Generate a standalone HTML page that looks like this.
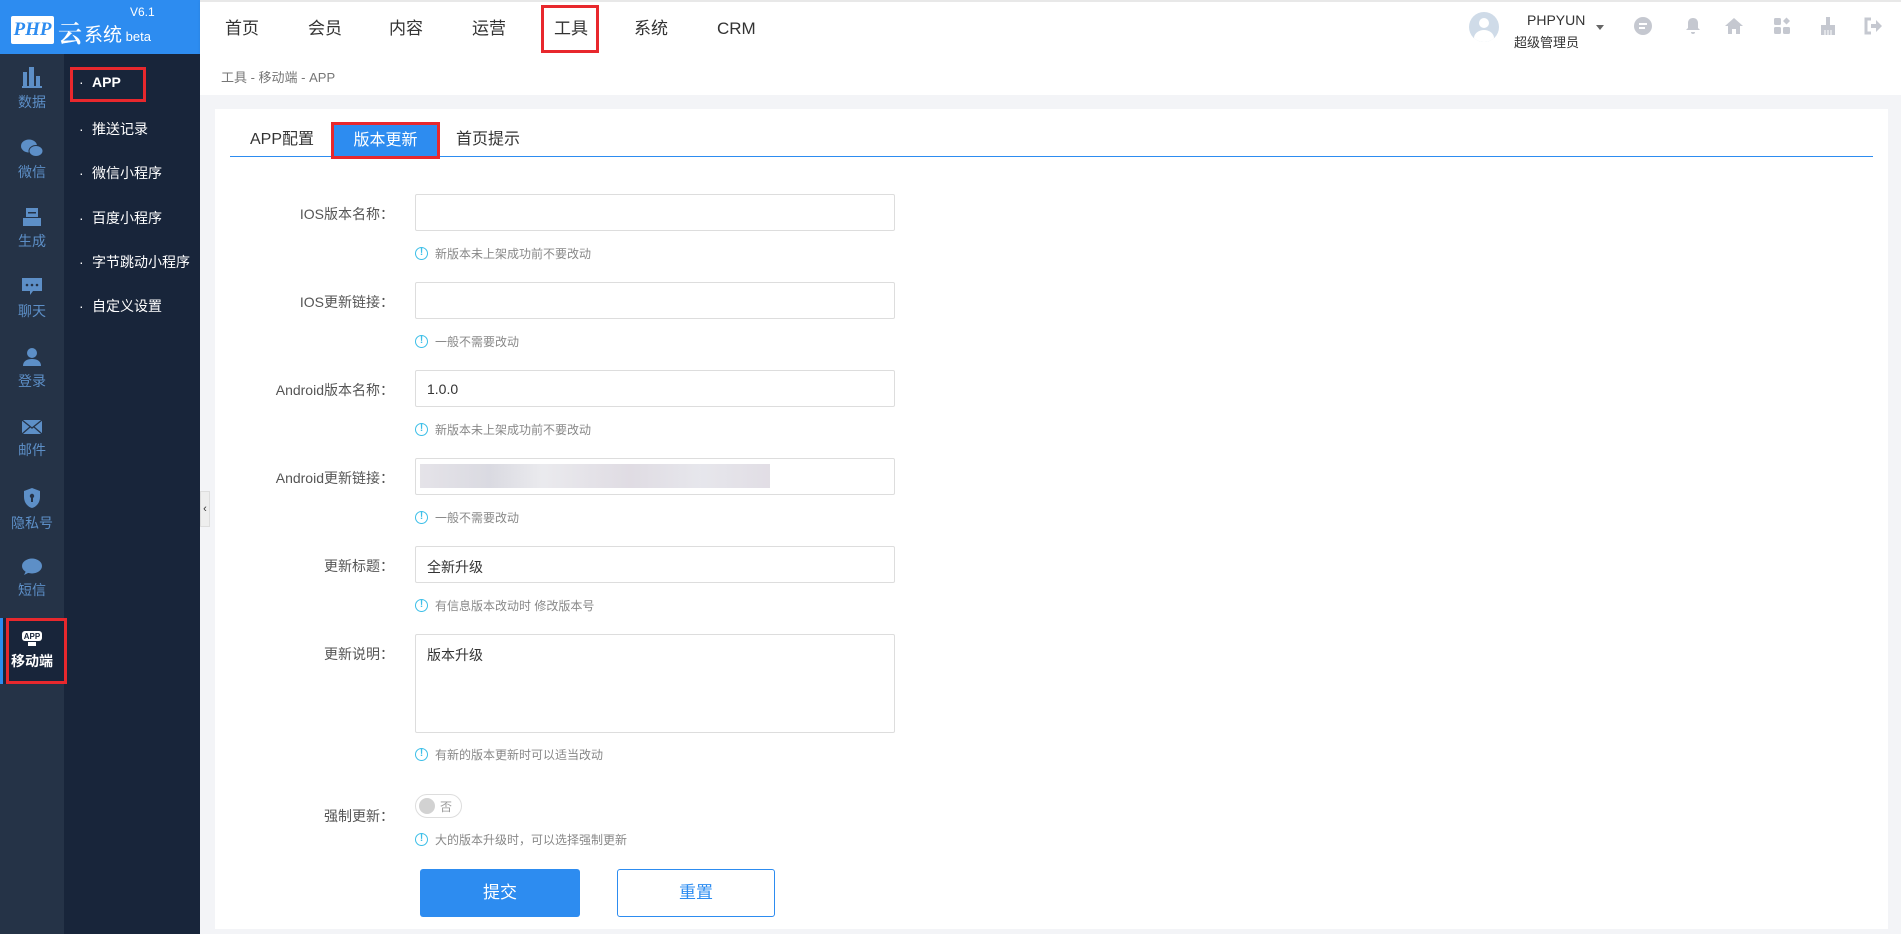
<!DOCTYPE html>
<html><head><meta charset="utf-8"><style>
*{margin:0;padding:0;box-sizing:border-box}
body{width:1901px;height:934px;overflow:hidden;background:#f3f4f7;font-family:"Liberation Sans","Noto Sans CJK SC",sans-serif;position:relative;color:#333}
.abs{position:absolute}
.logo{left:0;top:0;width:200px;height:54px;background:#2d8cf0}
.top{left:200px;top:0;width:1701px;height:54px;background:#fff;border-top:2px solid #e8e8e8;box-shadow:0 1px 3px rgba(0,0,0,.08)}
.nav{top:18px;height:22px;line-height:22px;font-size:17px;color:#333}
.side1{left:0;top:54px;width:64px;height:880px;background:#253347}
.side2{left:64px;top:54px;width:136px;height:880px;background:#18253a}
.si{left:0;width:64px;text-align:center;color:#5d8fc7;font-size:14px}
.si svg{display:block;margin:0 auto 4px}
.sub{left:79px;color:#fff;font-size:14px}
.sub b{display:inline-block;width:13px;font-weight:normal}
.red{border:3px solid #e8282d}
.lab{width:200px;left:194px;text-align:right;font-size:14px;color:#555}
.inp{left:415px;width:480px;height:37px;border:1px solid #ddd;border-radius:2px;background:#fff;font-size:14px;padding:10px 11px;color:#333}
.hint{left:415px;font-size:12px;color:#888;display:flex;align-items:center}
.hint i{display:inline-block;width:13px;height:13px;border:1.5px solid #3dbfe8;border-radius:50%;color:#3dbfe8;font-style:normal;font-size:10px;line-height:10px;text-align:center;margin-right:7px;font-weight:bold}
.ic{top:16px;width:20px;height:20px}
.tab{top:129px;height:22px;line-height:22px;font-size:16px}
</style></head><body>
<div class="abs logo">
 <div class="abs" style="left:11px;top:16px;width:43px;height:28px;background:#fff;border-radius:2px;color:#2d8cf0;font:italic bold 19px 'Liberation Serif',serif;line-height:28px;text-align:center">PHP</div>
 <div class="abs" style="left:58px;top:14px;color:#fff;font-size:24px;font-weight:bold;font-family:'Noto Serif CJK SC',serif">云</div>
 <div class="abs" style="left:84px;top:20px;color:#fff;font-size:19px">系统<span style="font-size:13px"> beta</span></div>
 <div class="abs" style="left:130px;top:5px;color:#fff;font-size:12px">V6.1</div>
</div>
<div class="abs top"></div>
<div class="abs nav" style="left:225px">首页</div>
<div class="abs nav" style="left:308px">会员</div>
<div class="abs nav" style="left:389px">内容</div>
<div class="abs nav" style="left:472px">运营</div>
<div class="abs nav" style="left:554px">工具</div>
<div class="abs nav" style="left:634px">系统</div>
<div class="abs nav" style="left:717px">CRM</div>
<div class="abs red" style="left:541px;top:5px;width:58px;height:48px"></div>
<div class="abs" style="left:1469px;top:12px;width:30px;height:30px;border-radius:50%;background:#cfdbe8;overflow:hidden"><div class="abs" style="left:10px;top:6px;width:10px;height:10px;border-radius:50%;background:#fff"></div><div class="abs" style="left:5px;top:18px;width:20px;height:16px;border-radius:50%;background:#fff"></div></div>
<div class="abs" style="left:1527px;top:12px;font-size:14px">PHPYUN</div>
<div class="abs" style="left:1514px;top:32px;font-size:13px">超级管理员</div>
<div class="abs" style="left:1596px;top:25px;border:4px solid transparent;border-top:5px solid #666"></div>
<svg class="abs ic" style="left:1633px" viewBox="0 0 20 20"><circle cx="10" cy="10" r="9" fill="#c5c8d0"/><rect x="6" y="7" width="8" height="2" fill="#fff"/><rect x="6" y="11" width="6" height="2" fill="#fff"/></svg>
<svg class="abs ic" style="left:1683px" viewBox="0 0 20 20"><path d="M10 2c-3 0-5 2-5 5v5l-2 2h14l-2-2V7c0-3-2-5-5-5zM8 16h4a2 2 0 01-4 0z" fill="#c5c8d0"/></svg>
<svg class="abs ic" style="left:1724px" viewBox="0 0 20 20"><path d="M10 2L1 10h3v8h4v-5h4v5h4v-8h3z" fill="#c5c8d0"/></svg>
<svg class="abs ic" style="left:1772px" viewBox="0 0 20 20"><rect x="2" y="2" width="7" height="7" rx="1.5" fill="#c5c8d0"/><rect x="2" y="11" width="7" height="7" rx="1.5" fill="#c5c8d0"/><rect x="11" y="11" width="7" height="7" rx="1.5" fill="#c5c8d0"/><path d="M14.5 1.5l3.5 3.5-3.5 3.5-3.5-3.5z" fill="#c5c8d0"/></svg>
<svg class="abs ic" style="left:1818px" viewBox="0 0 20 20"><rect x="8" y="1" width="4" height="8" fill="#c5c8d0"/><rect x="3" y="9" width="14" height="3" fill="#c5c8d0"/><path d="M3 12h14v7H3z" fill="#c5c8d0"/><path d="M7 14v5M10 14v5M13 14v5" stroke="#fff" stroke-width="1"/></svg>
<svg class="abs ic" style="left:1863px" viewBox="0 0 20 20"><path d="M8 3H3v14h5" stroke="#c5c8d0" stroke-width="3" fill="none"/><path d="M8 8h5V4l6 6-6 6v-4H8z" fill="#c5c8d0"/></svg>

<div class="abs side1"></div>
<div class="abs side2"></div>
<div class="abs si" style="top:66px"><svg width="20" height="22" viewBox="0 0 20 22"><rect x="1" y="6" width="4" height="14" fill="#5d8fc7"/><rect x="7" y="1" width="5" height="19" fill="#5d8fc7"/><rect x="14" y="10" width="4" height="10" fill="#5d8fc7"/><rect x="0" y="20" width="20" height="2" fill="#5d8fc7"/></svg>数据</div>
<div class="abs si" style="top:138px"><svg width="22" height="20" viewBox="0 0 22 20"><ellipse cx="8" cy="8" rx="8" ry="6.5" fill="#5d8fc7"/><ellipse cx="15" cy="13" rx="7" ry="5.5" fill="#5d8fc7" stroke="#253347"/></svg>微信</div>
<div class="abs si" style="top:207px"><svg width="20" height="20" viewBox="0 0 20 20"><rect x="4" y="1" width="12" height="9" fill="#5d8fc7"/><rect x="1" y="11" width="18" height="8" fill="#5d8fc7"/><rect x="6" y="5" width="8" height="1.5" fill="#253347"/></svg>生成</div>
<div class="abs si" style="top:277px"><svg width="22" height="20" viewBox="0 0 22 20"><path d="M1 1h20v13H12l-3 4v-4H1z" fill="#5d8fc7"/><circle cx="6" cy="8" r="1.3" fill="#253347"/><circle cx="11" cy="8" r="1.3" fill="#253347"/><circle cx="16" cy="8" r="1.3" fill="#253347"/></svg>聊天</div>
<div class="abs si" style="top:347px"><svg width="20" height="20" viewBox="0 0 20 20"><circle cx="10" cy="6" r="5" fill="#5d8fc7"/><path d="M1 19c0-5 4-7 9-7s9 2 9 7z" fill="#5d8fc7"/></svg>登录</div>
<div class="abs si" style="top:418px"><svg width="22" height="18" viewBox="0 0 22 18"><rect x="1" y="2" width="20" height="14" fill="#5d8fc7"/><path d="M1 2l10 8 10-8M1 16l8-7M21 16l-8-7" stroke="#253347" stroke-width="1.3" fill="none"/></svg>邮件</div>
<div class="abs si" style="top:487px"><svg width="18" height="22" viewBox="0 0 18 22"><path d="M9 1L1 4v6c0 6 4 10 8 11 4-1 8-5 8-11V4z" fill="#5d8fc7"/><circle cx="9" cy="9" r="2.2" fill="#253347"/><rect x="8" y="10" width="2" height="5" fill="#253347"/></svg>隐私号</div>
<div class="abs si" style="top:558px"><svg width="22" height="18" viewBox="0 0 22 18"><ellipse cx="11" cy="8" rx="10" ry="7.5" fill="#5d8fc7"/><path d="M5 13l-2 4 6-3z" fill="#5d8fc7"/></svg>短信</div>
<div class="abs" style="left:0;top:618px;width:64px;height:66px;background:#18253a"></div>
<div class="abs" style="left:0;top:618px;width:3px;height:66px;background:#2d8cf0"></div>
<div class="abs si" style="top:629px;color:#fff;font-weight:bold"><svg width="22" height="18" viewBox="0 0 22 18"><rect x="1" y="2" width="20" height="10" rx="3" fill="#fff"/><text x="11" y="10" font-size="8" font-weight="bold" text-anchor="middle" fill="#18253a" font-family="Liberation Sans">APP</text><rect x="7" y="13" width="8" height="4" fill="#fff"/></svg>移动端</div>
<div class="abs red" style="left:6px;top:618px;width:61px;height:66px"></div>

<div class="abs sub" style="top:74px;font-weight:bold"><b>·</b>APP</div>
<div class="abs sub" style="top:119px"><b>·</b>推送记录</div>
<div class="abs sub" style="top:163px"><b>·</b>微信小程序</div>
<div class="abs sub" style="top:208px"><b>·</b>百度小程序</div>
<div class="abs sub" style="top:252px"><b>·</b>字节跳动小程序</div>
<div class="abs sub" style="top:296px"><b>·</b>自定义设置</div>
<div class="abs red" style="left:70px;top:67px;width:76px;height:35px"></div>
<div class="abs" style="left:200px;top:491px;width:10px;height:36px;background:#eee;border:1px solid #ddd;font-size:11px;line-height:34px;text-align:center;color:#333">‹</div>

<div class="abs" style="left:200px;top:54px;width:1701px;height:41px;background:#fff"></div>
<div class="abs" style="left:221px;top:67px;font-size:13px;color:#777">工具 - 移动端 - APP</div>

<div class="abs" style="left:215px;top:109px;width:1673px;height:820px;background:#fff"></div>
<div class="abs" style="left:230px;top:156px;width:1643px;height:1px;background:#2d8cf0"></div>
<div class="abs tab" style="left:250px">APP配置</div>
<div class="abs" style="left:333px;top:125px;width:105px;height:32px;background:#2d8cf0;color:#fff;font-size:16px;text-align:center;line-height:32px">版本更新</div>
<div class="abs red" style="left:331px;top:122px;width:109px;height:37px"></div>
<div class="abs tab" style="left:456px">首页提示</div>

<div class="abs lab" style="top:204px">IOS版本名称：</div>
<div class="abs inp" style="top:194px"></div>
<div class="abs hint" style="top:245px"><i>!</i>新版本未上架成功前不要改动</div>
<div class="abs lab" style="top:292px">IOS更新链接：</div>
<div class="abs inp" style="top:282px"></div>
<div class="abs hint" style="top:333px"><i>!</i>一般不需要改动</div>
<div class="abs lab" style="top:380px">Android版本名称：</div>
<div class="abs inp" style="top:370px">1.0.0</div>
<div class="abs hint" style="top:421px"><i>!</i>新版本未上架成功前不要改动</div>
<div class="abs lab" style="top:468px">Android更新链接：</div>
<div class="abs inp" style="top:458px"></div>
<div class="abs" style="left:420px;top:464px;width:350px;height:24px;background:linear-gradient(90deg,#e2e0e6,#d6d6de 20%,#e8e8ec 35%,#dcd8e0 60%,#e4e4ea 80%,#dedae2);opacity:.9"></div>
<div class="abs hint" style="top:509px"><i>!</i>一般不需要改动</div>
<div class="abs lab" style="top:556px">更新标题：</div>
<div class="abs inp" style="top:546px">全新升级</div>
<div class="abs hint" style="top:597px"><i>!</i>有信息版本改动时 修改版本号</div>
<div class="abs lab" style="top:644px">更新说明：</div>
<div class="abs inp" style="top:634px;height:99px">版本升级</div>
<div class="abs hint" style="top:746px"><i>!</i>有新的版本更新时可以适当改动</div>
<div class="abs lab" style="top:806px">强制更新：</div>
<div class="abs" style="left:415px;top:794px;width:47px;height:24px;border:1px solid #ddd;border-radius:12px;background:#fff"><div class="abs" style="left:3px;top:3px;width:16px;height:16px;border-radius:50%;background:#d2d2d2"></div><div class="abs" style="left:24px;top:3px;font-size:12px;color:#999">否</div></div>
<div class="abs hint" style="top:831px"><i>!</i>大的版本升级时，可以选择强制更新</div>
<div class="abs" style="left:420px;top:869px;width:160px;height:48px;background:#2d8cf0;border-radius:3px;color:#fff;font-size:17px;text-align:center;line-height:48px">提交</div>
<div class="abs" style="left:617px;top:869px;width:158px;height:48px;border:1px solid #2d8cf0;border-radius:3px;color:#2d8cf0;font-size:17px;text-align:center;line-height:46px;background:#fff">重置</div>
</body></html>
